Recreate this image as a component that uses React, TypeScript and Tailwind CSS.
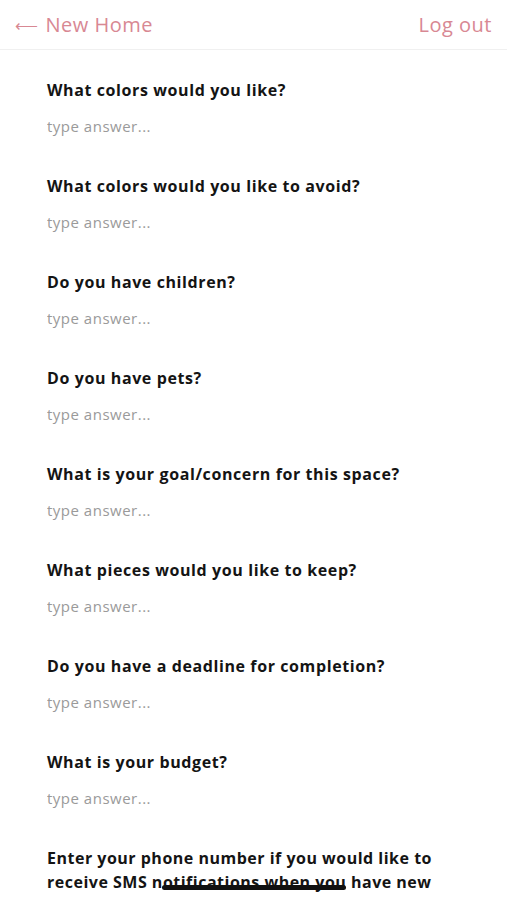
const questions = [
  "What colors would you like?",
  "What colors would you like to avoid?",
  "Do you have children?",
  "Do you have pets?",
  "What is your goal/concern for this space?",
  "What pieces would you like to keep?",
  "Do you have a deadline for completion?",
  "What is your budget?",
];

export default function App() {
  return (
    <div className="relative h-[900px] overflow-hidden bg-white font-['Open_Sans',sans-serif]">
      <header className="flex h-[50px] items-center justify-between border-b border-[#f0f0f0] pl-[15px] pr-[15px] text-[20px] tracking-[0.5px] text-[#d88893]">
        <button className="flex items-center gap-[7px]">
          <span className="text-[16px] leading-none">⟵</span>
          <span>New Home</span>
        </button>
        <button>Log out</button>
      </header>

      <div className="px-[47px] pt-[28px]">
        {questions.map((q) => (
          <div key={q} className="h-[96px]">
            <p className="h-[24px] text-[16px] font-bold leading-[24px] tracking-[0.6px] text-[#141414]">{q}</p>
            <input
              className="mt-[12px] block h-[24px] w-full text-[15px] tracking-[0.5px] text-[#999] outline-none placeholder:text-[#9a9a9a]"
              placeholder="type answer..."
            />
          </div>
        ))}
        <p className="text-[16px] font-bold leading-[24px] tracking-[0.5px] text-[#141414]">
          Enter your phone number if you would like to receive SMS notifications when you have new
        </p>
      </div>

      <div className="absolute bottom-[10px] left-[162px] h-[5px] w-[184px] rounded-full bg-[#111]" />
    </div>
  );
}
